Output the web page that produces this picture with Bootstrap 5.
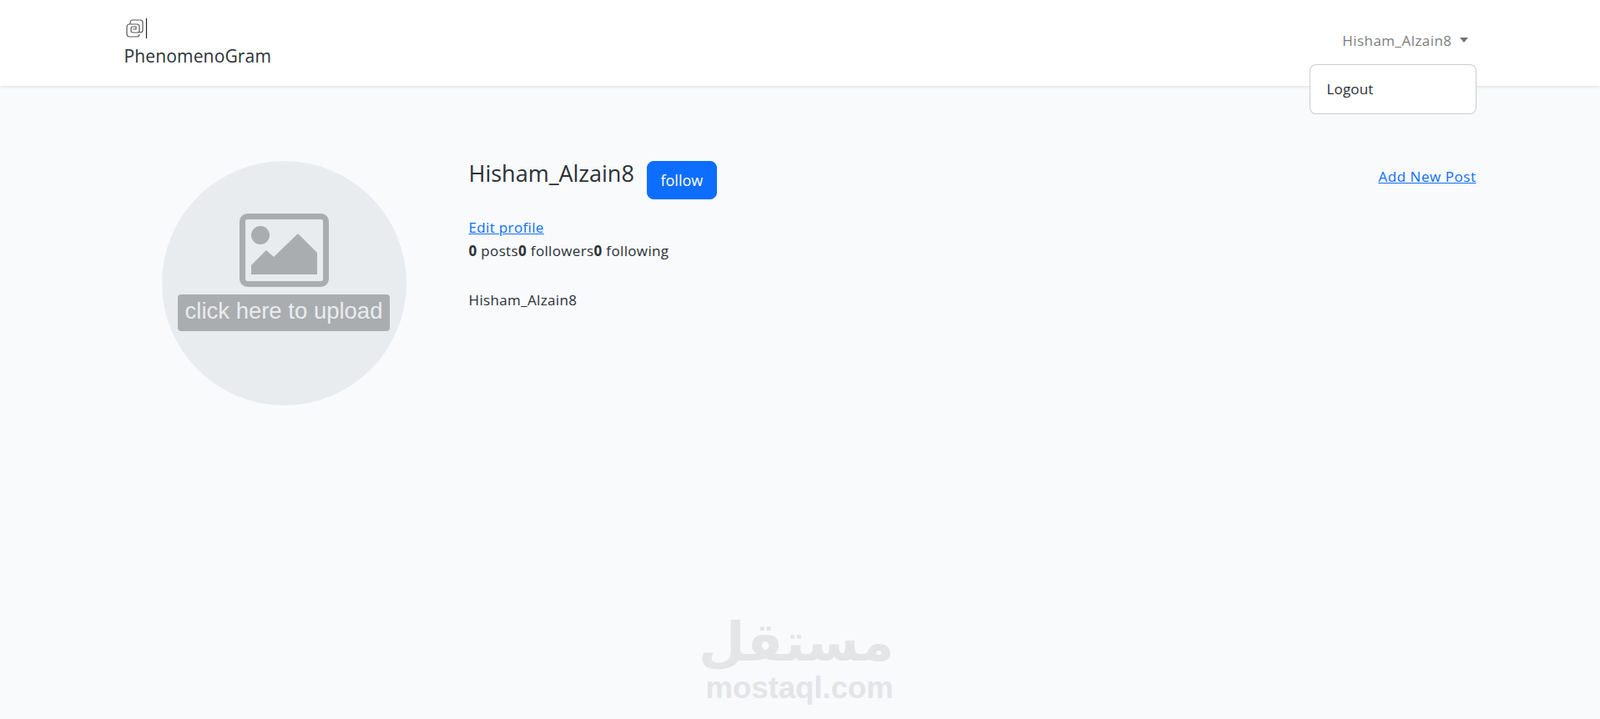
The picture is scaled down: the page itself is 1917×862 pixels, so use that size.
<!DOCTYPE html>
<html lang="en">
<head>
    <meta charset="UTF-8">
    <meta name="viewport" content="width=device-width, initial-scale=1.0">
    <title>PhenomenoGram</title>
    <link href="https://cdn.jsdelivr.net/npm/bootstrap@5.3.0/dist/css/bootstrap.min.css" rel="stylesheet">
    <style>
        body {
            background-color: #f8fafc;
            color: #2b3036;
            font-family: "Open Sans", "Noto Sans", sans-serif;
            font-size: 16px;
            min-height: 862px;
        }
        .page-wrap {
            max-width: 1644px;
        }
        .top-bar {
            height: 103px;
            background-color: #fff;
            box-shadow: 0 1px 4px rgba(0, 0, 0, .12);
            padding: 0;
        }
        .brand-box {
            color: #2b3036;
            font-size: 21px;
            line-height: 30px;
            letter-spacing: .15px;
            padding: 0;
            margin: 0;
        }
        .brand-box svg {
            display: block;
            margin-left: 1px;
            margin-bottom: 6px;
        }
        .user-toggle {
            color: rgba(0, 0, 0, .55);
            font-size: 17px;
            letter-spacing: .45px;
            padding: 0;
            margin-right: 10px;
            margin-bottom: 5px;
        }
        .user-toggle:hover {
            color: rgba(0, 0, 0, .55);
        }
        .user-toggle::after {
            margin-left: 9px;
            border-top-width: 6px;
            border-left-width: 5.500px;
            border-right-width: 5.500px;
        }
        .logout-menu {
            position: absolute;
            top: 77px;
            right: 12px;
            width: 200px;
            height: 60px;
            background-color: #fff;
            border: 1px solid rgba(0, 0, 0, .2);
            border-radius: 8px;
            padding: 15px 20px;
            font-size: 17px;
            letter-spacing: .15px;
            line-height: 28px;
            z-index: 10;
        }
        .profile-row {
            padding-top: 90px;
        }
        .avatar-col {
            width: 413px;
            padding-left: 45px;
        }
        .avatar-pic {
            display: block;
        }
        .name-title {
            font-size: 27px;
            font-weight: 400;
            line-height: 30px;
            margin: 0;
            padding-bottom: 16px;
        }
        .follow-btn {
            width: 84px;
            height: 46px;
            font-size: 18px;
            border-radius: 8px;
            padding: 0;
            margin-left: 15px;
        }
        .side-text {
            font-size: 17px;
            letter-spacing: .35px;
            line-height: 28px;
        }
        .edit-link {
            margin-top: 20px;
        }
        .bio-line {
            margin-top: 31px;
        }
        .new-post {
            font-size: 17px;
            letter-spacing: .55px;
            margin-top: 6px;
        }
        .watermark {
            position: absolute;
            left: 845px;
            top: 734px;
            width: 226px;
            text-align: center;
            color: #e3e5e7;
            pointer-events: none;
        }
        .watermark-ar {
            font-family: "DejaVu Sans", sans-serif;
            font-weight: 700;
            font-size: 64px;
            line-height: 72px;
        }
        .watermark-en {
            font-family: "Liberation Sans", sans-serif;
            font-weight: 700;
            font-size: 36.500px;
            line-height: 38px;
        }
    </style>
</head>
<body>
    <!-- Header -->
    <nav class="navbar top-bar">
        <div class="container-fluid page-wrap h-100 position-relative d-flex justify-content-between align-items-center">
            <a class="navbar-brand brand-box" href="#">
                <svg width="27" height="24" viewBox="0 0 27 24" fill="none" stroke="#555" stroke-width="1.200">
                    <path d="M6 7V5a3 3 0 0 1 3-3h9a3 3 0 0 1 3 3v9a3 3 0 0 1-3 3h-1"/>
                    <path d="M17 19a3 3 0 0 1-3 3H5a3 3 0 0 1-3-3v-9a3 3 0 0 1 3-3h9a3 3 0 0 1 3 3v5a2 2 0 0 1-2 2H9a2 2 0 0 1-2-2v-3a2 2 0 0 1 2-2h4v3H9"/>
                    <path d="M25.500 0V24" stroke="#222"/>
                </svg>
                PhenomenoGram
            </a>
            <a class="nav-link dropdown-toggle user-toggle" href="#">Hisham_Alzain8</a>
            <div class="logout-menu">Logout</div>
        </div>
    </nav>

    <!-- Perfil -->
    <div class="container-fluid page-wrap">
        <div class="d-flex profile-row">
            <div class="avatar-col flex-shrink-0">
                <svg class="avatar-pic" width="293" height="293" viewBox="0 0 293 293">
                    <circle cx="146.500" cy="146.500" r="146.500" fill="#e9ecef"/>
                    <rect x="96.500" y="66.500" width="100" height="81" rx="6" fill="none" stroke="#a9adb0" stroke-width="7"/>
                    <circle cx="118" cy="89" r="11" fill="#a9adb0"/>
                    <path d="M107 125V136H186V110L163 87L134 115L125 107Z" fill="#a9adb0"/>
                    <rect x="19" y="160" width="254" height="44" rx="4" fill="#a9adb0"/>
                    <text x="146" y="189" text-anchor="middle" font-family="Liberation Sans, sans-serif" font-size="27.500" fill="#e9ecef">click here to upload</text>
                </svg>
            </div>
            <div class="flex-grow-1">
                <div class="d-flex justify-content-between align-items-start">
                    <div class="d-flex align-items-start">
                        <h2 class="name-title">Hisham_Alzain8</h2>
                        <button type="button" class="btn btn-primary follow-btn">follow</button>
                    </div>
                    <a class="new-post" href="#">Add New Post</a>
                </div>
                <div class="side-text edit-link"><a href="#">Edit profile</a></div>
                <div class="side-text"><b>0</b> posts<b>0</b> followers<b>0</b> following</div>
                <div class="side-text bio-line">Hisham_Alzain8</div>
            </div>
        </div>
    </div>

    <!-- Marca de agua -->
    <div class="watermark">
        <div class="watermark-ar" lang="ar" dir="rtl">مستقل</div>
        <div class="watermark-en">mostaql.com</div>
    </div>

    <script src="https://cdn.jsdelivr.net/npm/bootstrap@5.3.0/dist/js/bootstrap.bundle.min.js"></script>
</body>
</html>
